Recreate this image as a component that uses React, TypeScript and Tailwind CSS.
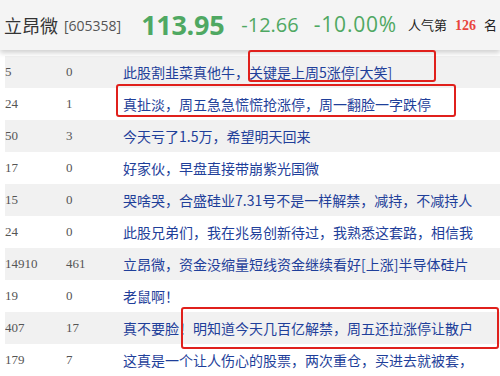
const rows: [string, string, string][] = [
  ["5", "0", "此股割韭菜真他牛，关键是上周5涨停[大笑]"],
  ["24", "1", "真扯淡，周五急急慌慌抢涨停，周一翻脸一字跌停"],
  ["50", "3", "今天亏了1.5万，希望明天回来"],
  ["17", "0", "好家伙，早盘直接带崩紫光国微"],
  ["15", "0", "哭啥哭，合盛硅业7.31号不是一样解禁，减持，不减持人"],
  ["24", "0", "此股兄弟们，我在兆易创新待过，我熟悉这套路，相信我"],
  ["14910", "461", "立昂微，资金没缩量短线资金继续看好[上涨]半导体硅片"],
  ["19", "0", "老鼠啊！"],
  ["407", "17", "真不要脸！明知道今天几百亿解禁，周五还拉涨停让散户"],
  ["179", "7", "这真是一个让人伤心的股票，两次重仓，买进去就被套，"],
]

const cjk = "font-['Noto_Sans_CJK_SC',sans-serif]"

export default function App() {
  return (
    <div className="relative w-[500px] h-[376px] overflow-hidden bg-white">
      <div className="h-[50px] bg-[#f4f4f4] flex items-center pl-[4px] whitespace-nowrap shadow-[0_3px_5px_rgba(0,0,0,0.18)] relative z-10">
        <span className={`${cjk} text-[18px] text-[#333]`}>立昂微</span>
        <span className="font-['Open_Sans',sans-serif] text-[14px] text-[#555] ml-[6px]">[605358]</span>
        <span className="font-['Open_Sans',sans-serif] font-bold text-[27px] text-[#4fa862] ml-[20px] tracking-[-0.3px]">113.95</span>
        <span className="font-['Open_Sans',sans-serif] text-[20px] text-[#4fa862] ml-[17px]">-12.66</span>
        <span className="font-['Open_Sans',sans-serif] text-[21px] text-[#4fa862] ml-[15px] tracking-[0.8px]">-10.00%</span>
        <span className={`${cjk} text-[13px] text-[#222] ml-[11px]`}>人气第</span>
        <span className="font-['Liberation_Serif',serif] font-bold text-[14px] text-[#e8453c] ml-[8px]">126</span>
        <span className={`${cjk} text-[13px] text-[#222] ml-[8px]`}>名</span>
      </div>
      <div className="pt-[6px] pl-[5px]">
        {rows.map(([a, b, t], i) => (
          <div
            key={i}
            className={`h-[32px] flex items-center whitespace-nowrap overflow-hidden ${i % 2 === 0 ? "bg-[#f1f1f1]" : "bg-white"}`}
          >
            <span className="w-[61px] font-['Liberation_Serif',serif] text-[13px] text-[#555]">{a}</span>
            <span className="w-[57px] font-['Liberation_Serif',serif] text-[13px] text-[#555]">{b}</span>
            <span className={`${cjk} text-[14px] text-[#1f3f9a]`}>{t}</span>
          </div>
        ))}
      </div>
      <div className="absolute left-[248px] top-[50px] w-[188px] h-[32px] border-2 border-[#e0201c] rounded-[3px] z-20" />
      <div className="absolute left-[116px] top-[84px] w-[340px] h-[33px] border-2 border-[#e0201c] rounded-[3px] z-20" />
      <div className="absolute left-[181px] top-[307px] w-[318px] h-[42px] border-2 border-[#e0201c] rounded-[3px] z-20" />
    </div>
  )
}
